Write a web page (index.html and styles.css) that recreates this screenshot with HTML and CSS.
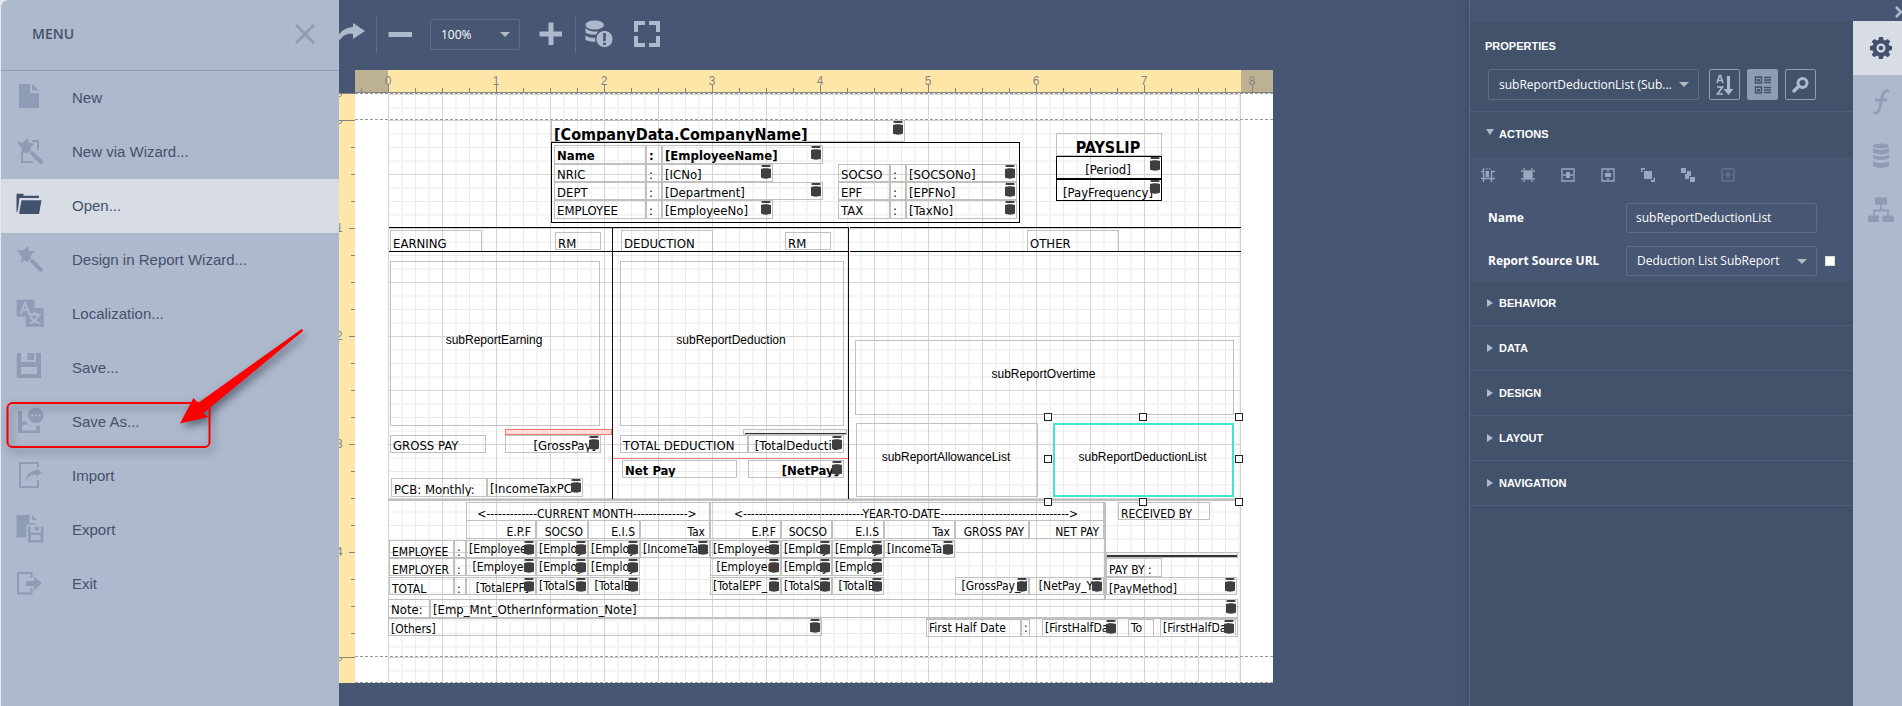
FILE: index.html
```html
<!DOCTYPE html>
<html lang="en">
<head>
<meta charset="utf-8">
<title>Report Designer</title>
<link rel="stylesheet" href="styles.css">
</head>
<body>
<div class="designer">
  <nav class="menu" aria-label="Menu">
    <header class="menu-head">
      <h1>MENU</h1>
      <button class="menu-close" aria-label="Close"><svg width="20" height="20" viewBox="0 0 20 20"><path d="M1 1l18 18M19 1L1 19" fill="none" stroke="currentColor" stroke-width="3"/></svg></button>
    </header>
    <button class="menu-item"><svg viewBox="0 0 28 28"><path d="M3 1h11v9h9v15H3zM16 1l7 6.500h-7z"/></svg>New</button>
    <button class="menu-item"><svg viewBox="0 0 28 28"><path d="M12 1l.8 5 6.200.6-4.500 3.800.5 3-4 3.500-2-1.500-4.500 2 1.500-5.500L1 5l6 .5z"/><path class="line" d="M16 4h6v9M6 17v8h11"/><path class="wand" d="M16 16l9 9"/></svg>New via Wizard...</button>
    <button class="menu-item active"><svg viewBox="0 0 28 28"><path d="M.5 2.700h7v2H23V7H3.500L2 19 .5 22z"/><path d="M5.500 9.300h20L23 23H3z"/></svg>Open...</button>
    <button class="menu-item"><svg viewBox="0 0 28 28"><path d="M12 1l.8 5 6.200.6-4.500 3.800.5 3-4 3.500-2-1.500-4.500 2 1.500-5.500L1 5l6 .5z"/><path class="wand" d="M16 16l9 9"/></svg>Design in Report Wizard...</button>
    <button class="menu-item"><svg viewBox="0 0 28 28"><path d="M.7.7H18.500V9H27.700V27.700H9.700V17.500H.7z"/><path class="cut" d="M4.500 15L9 4l4.500 11M6.500 11h5.500M12 15.500h13M18.500 12.500v3M22.500 15.500c-1 4-4 7-8.500 9M14.500 17.500c2 4 5 6 10 7"/></svg>Localization...</button>
    <button class="menu-item"><svg viewBox="0 0 28 28"><path fill-rule="evenodd" d="M.7 1.500L2 0h3v9h15V0h5v25H.7zM5 14v7h16v-7zM11.500 0H18v7h-6.500z"/></svg>Save...</button>
    <button class="menu-item"><svg viewBox="0 0 28 28"><path fill-rule="evenodd" d="M2 4h4v10h4c2 4 5 5.500 8 5.500l6-1V26H2zM6 19v4.500h14V19.500c-4 .5-7-.5-9-2.500z"/><circle cx="19.700" cy="8.500" r="7.800"/><path class="dots" d="M15 7.500h2v2h-2zM18.700 7.500h2v2h-2zM22.400 7.500h2v2h-2z"/></svg>Save As...</button>
    <button class="menu-item"><svg viewBox="0 0 28 28"><path class="line" d="M22 6V2H4v24h18v-7"/><path d="M9.700 20c.5-7 5-10.500 10.800-10.500V7l5 4.500-5 4.500v-2.500c-5 0-8 2-10.800 6.500z"/></svg>Import</button>
    <button class="menu-item"><svg viewBox="0 0 28 28"><path d="M.5 0h13v8h6v1.500h-9V22.500H.5zM16 0l5 5h-5z"/><path fill-rule="evenodd" d="M12 11.500h2.500v6H25v-6h2.500V27.500H12zM15 20v5h9.500v-5zM18.500 11.500H23v4h-4.500z"/></svg>Export</button>
    <button class="menu-item"><svg viewBox="0 0 28 28"><path class="line" d="M15.500 9V4H2v20.500h13.500v-5"/><path d="M10 12h8V7.500l8 6.700-8 6.700V17h-8z"/></svg>Exit</button>
    <svg class="callout" width="320" height="140" viewBox="0 0 320 140" aria-hidden="true">
      <rect x="7.500" y="83" width="202" height="44" rx="5" fill="none" stroke="#f40000" stroke-width="2"/>
      <path fill="#fd0000" d="M301 9.500l1.500 0 .5 1.500L203 93.500l5.500 3.500L180 103.500 193.500 78l4.500 5z"/>
    </svg>
  </nav>

  <main class="workspace">
    <div class="toolbar" role="toolbar" aria-label="Report">
      <button class="tool redo" aria-label="Redo"><svg width="27" height="24" viewBox="0 0 27 24"><path d="M-6 22C0 10 5 6 14 5V1l12 8-12 8v-5C7 11 3 14-2 22z"/></svg></button>
      <span class="rule"></span>
      <button class="tool minus" aria-label="Zoom out"><svg width="24" height="24" viewBox="0 0 24 24"><path d="M.5 10H24v5H.5z"/></svg></button>
      <span class="drop zoom"><select aria-label="Zoom"><option>100%</option></select></span>
      <button class="tool plus" aria-label="Zoom in"><svg width="24" height="24" viewBox="0 0 24 24"><path d="M.5 9.500h9V.5h5v9H23v5h-8.500V23h-5v-8.500h-9z"/></svg></button>
      <span class="rule"></span>
      <button class="tool source" aria-label="Validate bindings"><svg width="28" height="28" viewBox="0 0 28 28"><ellipse cx="9.700" cy="5" rx="9.300" ry="4.600"/><path d="M.4 8c3 3 8 4 13 3.500l-2.500 3C7 15 2 14 .4 12.500zM.4 15.500c3 2 6 2.500 10 2.200v4C6 22 2 21 .4 19.500z"/><circle cx="19.500" cy="19" r="8.600"/><path class="mark" d="M18.200 13h2.600v8h-2.600zM18.200 22.500h2.600v2.500h-2.600z"/></svg></button>
      <button class="tool full" aria-label="Full screen"><svg width="26" height="26" viewBox="0 0 26 26"><path d="M2 11V2h9M15 2h9v9M24 15v9h-9M11 24H2v-9" fill="none" stroke="currentColor" stroke-width="4"/></svg></button>
    </div>
    <div class="surface">
      <div class="ruler-x"><span>0</span><span>1</span><span>2</span><span>3</span><span>4</span><span>5</span><span>6</span><span>7</span><span>8</span></div>
      <div class="ruler-y">
        <div class="seg seg-top"><span>0</span></div>
        <div class="seg seg-detail"><span>0</span><span>1</span><span>2</span><span>3</span><span>4</span></div>
        <div class="seg seg-bottom"><span>0</span></div>
      </div>
      <div class="paper" id="paper">
        <div class="band band-top"></div>
        <div class="band band-detail"></div>
        <div class="band band-bottom"></div>
      </div>
    </div>
  </main>

  <aside class="side">
    <div class="side-top"><button class="collapse" aria-label="Collapse"><svg width="7" height="12" viewBox="0 0 7 12"><path d="M1 1l5 5-5 5" fill="none" stroke="currentColor" stroke-width="2.500"/></svg></button></div>
    <div class="side-body">
      <section class="props">
        <h2>PROPERTIES</h2>
        <div class="picker">
          <span class="drop grow"><select aria-label="Element"><option>subReportDeductionList (Sub...</option></select></span>
          <button class="square" aria-label="Sort"><svg width="20" height="22" viewBox="0 0 20 22"><path fill="none" stroke="currentColor" stroke-width="1.600" d="M2 9l2.500-7.500h1L8 9M3 6.500h4M2 13h5.500L2.500 20H8"/><path d="M12 2h3v13h3.500l-5 6-5-6H12z"/></svg></button>
          <button class="square on" aria-label="Categories"><svg width="18" height="20" viewBox="0 0 18 20"><path fill="none" stroke="currentColor" stroke-width="1.500" d="M1.500 2h6v6h-6zM1.500 12h6v6h-6zM10 2.500h7M10 5h7M10 7.500h7M10 12.500h7M10 15h7M10 17.500h7"/><path d="M3 4h3v2.500H3zM3 14h3v2.500H3z"/></svg></button>
          <button class="square" aria-label="Search"><svg width="18" height="18" viewBox="0 0 18 18"><circle cx="10.500" cy="7" r="4.500" fill="none" stroke="currentColor" stroke-width="3"/><path d="M7 10l-5 5" stroke="currentColor" stroke-width="3.500" stroke-linecap="round"/></svg></button>
        </div>
        <button class="group open"><i></i>ACTIONS</button>
        <div class="actions">
          <div class="action-bar">
            <button aria-label="Align to grid"><svg viewBox="0 0 14 14"><path class="ln" d="M2.500 0v14M10.500 4v10M0 3.500h3M10 3.500h4M0 10.500h14M5 .8h1.500M8 .8h1.500"/><path d="M4.500 3H8v6H4.500z"/></svg></button>
            <button aria-label="Size to grid"><svg viewBox="0 0 14 14"><path d="M2.500 2.500h9v9h-9z"/><path class="ln" d="M3 0v14M11 0v14M0 3h14M0 11h14" stroke-dasharray="2 1"/></svg></button>
            <button aria-label="Center horizontally"><svg viewBox="0 0 14 14"><path class="ln" d="M1 1h12v12H1zM2 7h3M9 7h3"/><path d="M5 4h4v6H5z"/></svg></button>
            <button aria-label="Center vertically"><svg viewBox="0 0 14 14"><path class="ln" d="M1 1h12v12H1zM7 1v3M7 10v3"/><path d="M4 5h6v4H4z"/></svg></button>
            <button aria-label="Bring to front"><svg viewBox="0 0 14 14"><path d="M3 3h8v8H3zM0 0h4v1.500H1.500V4H0zM14 14h-4v-2h2.500v-2H14z"/></svg></button>
            <button aria-label="Send to back"><svg viewBox="0 0 14 14"><path d="M0 0h5v5H0zM9 9h5v5H9zM4 6h2V3h4v5H8v3H4z"/></svg></button>
            <button class="off" aria-label="Fit bounds" disabled><svg viewBox="0 0 14 14"><path class="ln" d="M1 1h12v12H1z"/><path d="M5 5h4v4H5zM6 2.500h2l-1 1.500zM6 11.500h2L7 10zM2.500 6v2L4 7zM11.500 6v2L10 7z"/></svg></button>
          </div>
          <div class="prop"><label for="p-name">Name</label><input id="p-name" type="text" value="subReportDeductionList"></div>
          <div class="prop url"><label for="p-url">Report Source URL</label><span class="drop"><select id="p-url"><option>Deduction List SubReport</option></select></span><input type="checkbox" aria-label="Property marker"></div>
        </div>
        <button class="group"><i></i>BEHAVIOR</button>
        <button class="group"><i></i>DATA</button>
        <button class="group"><i></i>DESIGN</button>
        <button class="group"><i></i>LAYOUT</button>
        <button class="group"><i></i>NAVIGATION</button>
      </section>
      <div class="tabs">
        <button class="tab sel" aria-label="Properties"><svg width="24" height="24" viewBox="0 0 24 24"><path fill-rule="evenodd" d="M10 1h4l.6 3 1.500.6 2.600-1.700 2.600 2.600-1.700 2.600.6 1.400 2.800.6v4l-2.800.6-.6 1.400 1.700 2.600-2.600 2.600-2.600-1.700-1.500.6L14 23h-4l-.6-2.800-1.500-.6-2.600 1.700-2.600-2.600 1.700-2.600-.6-1.400L1 14v-4l2.800-.5.6-1.400-1.700-2.600 2.600-2.600 2.600 1.700 1.500-.6zM12 7.500a4.500 4.500 0 1 0 .01 0z"/><circle cx="12" cy="12" r="2.300"/></svg></button>
        <button class="tab" aria-label="Expressions"><svg width="18" height="26" viewBox="0 0 18 26"><path d="M17 2.500c-4-2-6 1-7 6L8 18c-1 5-3 7-6.500 5.500M3 11h12" fill="none" stroke="currentColor" stroke-width="2.800"/></svg></button>
        <button class="tab" aria-label="Fields"><svg width="16" height="26" viewBox="0 0 16 26"><ellipse cx="8" cy="3" rx="8" ry="2.600"/><path d="M0 5c3 2.500 13 2.500 16 0v4.500c-3 2.500-13 2.500-16 0zM0 11.500c3 2.500 13 2.500 16 0v3.500c-3 2.500-13 2.500-16 0zM0 18c3 2.500 13 2.500 16 0v5c-3 2.500-13 2.500-16 0z"/></svg></button>
        <button class="tab" aria-label="Report explorer"><svg width="26" height="26" viewBox="0 0 26 26"><path d="M7 .5h12v7H7zM0 18.500h11v6.500H0zM14.500 18.500H26v6.500H14.500z"/><path d="M13 7v6M6 19v-5.500h14V19" fill="none" stroke="currentColor" stroke-width="1.800"/></svg></button>
      </div>
    </div>
  </aside>
</div>
<script src="script.js"></script>
</body>
</html>
```
FILE: styles.css
```css
* { box-sizing: border-box; }
body { margin: 0; background: #475672; font-family: "Liberation Sans", Arial, sans-serif; }
button { margin: 0; padding: 0; border: 0; background: none; font: inherit; color: inherit; text-align: left; }
svg { display: block; fill: currentColor; }
select, input { font: inherit; color: inherit; }

.designer { display: flex; min-height: 100vh; background: #475672; }

/* menu */
.menu { position: relative; flex: none; width: 338px; margin-left: 1px; background: #afb9cd; color: #43526c; border-top-left-radius: 8px; box-shadow: -4px -4px 0 4px #e6e8ec; clip-path: inset(0 0 0 -1px); }
.menu-head { display: flex; align-items: center; justify-content: space-between; height: 71px; padding: 0 24px 3px 31px; border-bottom: 1px solid #8f9db5; }
.menu-head h1 { margin: 0; font: 600 14px "Open Sans", sans-serif; }
.menu-close, .menu-item svg { color: #8e9cb5; }
.menu-item { display: flex; align-items: center; gap: 28px; width: 100%; height: 54px; padding: 0 0 2px 15px; font-size: 15px; }
.menu-item svg { width: 28px; height: 28px; }
.menu-item .line { fill: none; stroke: currentColor; stroke-width: 2; }
.menu-item .wand { stroke: currentColor; stroke-width: 4; stroke-linecap: round; }
.menu-item .cut { fill: none; stroke: #afb9cd; stroke-width: 2; }
.menu-item .dots { fill: #afb9cd; }
.menu-item.active { background: #d8dce4; }
.menu-item.active svg { color: #43526c; }
.callout { position: absolute; left: -1px; top: 320px; pointer-events: none; filter: drop-shadow(3px 4px 4px rgba(30, 40, 60, .6)); }

/* workspace */
.workspace { flex: 1; min-width: 0; overflow: hidden; }
.toolbar { display: flex; align-items: center; height: 70px; padding-bottom: 2px; color: #afb9cd; }
.tool { flex: none; }
.rule { flex: none; width: 1px; height: 38px; background: #5c6b87; }
.redo { margin-right: 10px; }
.minus { margin: 0 18px 0 11px; }
.plus { margin: 0 12px 0 19px; }
.source { margin: 0 21px 0 9px; }
.source .mark { fill: #475672; }
.source circle { stroke: #475672; stroke-width: 1; }

.drop { position: relative; display: flex; height: 31px; color: #fff; font: 12px "Open Sans", "Noto Sans", sans-serif; }
.drop select { appearance: none; width: 100%; padding: 0 20px 0 10px; background: transparent; border: 1px solid #5d6c88; border-radius: 2px; }
.drop::after { content: ""; position: absolute; right: 10px; top: 13px; border: 5px solid transparent; border-top-color: #b4b8bf; border-bottom: 0; pointer-events: none; }
.zoom { width: 90px; }

.surface { display: grid; grid-template-columns: 16px 918px; grid-template-rows: 23px auto; }
.ruler-x { grid-column: 2; display: flex; overflow: hidden; border-bottom: 1px solid #85857f; color: #858585; font-size: 12px; line-height: 22px; text-align: center;
  background:
    repeating-linear-gradient(90deg, #85857f 0 1px, transparent 1px 108px) 33px 100% / 1080px 7px repeat-x,
    repeating-linear-gradient(90deg, #85857f 0 1px, transparent 1px 27px) 33px 100% / 1080px 4px repeat-x,
    linear-gradient(90deg, #bdb193 0 33px, #fde6a8 33px 886px, #bdb193 886px); }
.ruler-x span { flex: none; width: 108px; }
.ruler-x span:first-child { margin-left: -21px; }
.ruler-y { display: flex; flex-direction: column; color: #858585; font-size: 12px; }
.seg { overflow: hidden; border-top: 1px solid #85857f;
  background:
    repeating-linear-gradient(#85857f 0 1px, transparent 1px 108px) 100% -1px / 6px 1080px no-repeat,
    repeating-linear-gradient(#85857f 0 1px, transparent 1px 27px) 100% -1px / 4px 1080px no-repeat,
    #fde6a8; }
.seg span { display: block; height: 108px; margin-left: -3px; line-height: 14px; }
.seg span:first-child { margin-top: -8px; }
.seg-top { height: 27px; }
.seg-detail { height: 537px; }
.seg-bottom { height: 26px; }

.paper { position: relative; background: #fff; color: #000; font: 13px "DejaVu Sans Condensed", "DejaVu Sans", sans-serif; font-stretch: condensed; }
.band { border-bottom: 1px dashed #999; padding: 0 32px 0 33px; }
.band::before { content: ""; display: block; height: 100%; border-right: 1px dashed #d0d0d0;
  background:
    repeating-linear-gradient(90deg, #d4d4d4 0 1px, transparent 1px 54px),
    repeating-linear-gradient(#d4d4d4 0 1px, transparent 1px 54px),
    repeating-linear-gradient(90deg, #ebebeb 0 1px, transparent 1px 27px),
    repeating-linear-gradient(#ebebeb 0 1px, transparent 1px 27px),
    repeating-linear-gradient(90deg, transparent 0 13px, #f5f5f5 13px 15px, transparent 15px 27px),
    repeating-linear-gradient(transparent 0 13px, #f5f5f5 13px 15px, transparent 15px 27px); }
.band-top { height: 27px; border-top: 1px dashed #999; }
.band-detail { height: 537px; }
.band-bottom { height: 26px; }

.field { position: absolute; overflow: hidden; padding: 2px 4px 0 2px; border: 1px solid #c0c0c0; line-height: 16px; white-space: nowrap; }
.field.s { font-size: 12px; }
.field.b { font-weight: 700; }
.field.big { font-size: 16px; line-height: 20px; padding-top: 4px; }
.field.c { text-align: center; }
.field.r { text-align: right; }
.field.k { border-color: #000; }
.field.p0 { padding-top: 0; }
.field.p3 { padding-top: 3px; }
.field.p5 { padding-top: 5px; }
.field .db { position: absolute; right: 1px; top: 0; color: #3f3f3f; }
.sub { position: absolute; display: flex; align-items: center; justify-content: center; padding: 0 2px 7px 0; border: 1px solid #c0c0c0; font: 12px "Liberation Sans", Arial, sans-serif; }
.sub.picked { border: 2px solid #40e6d0; }
.mark-line { position: absolute; }
.mark-line.black { background: #000; }
.mark-line.wine { background: #2c0008; }
.mark-line.gray { background: #c0c0c0; }
.mark-line.dark { background: #333; }
.mark-line.red { background: #f87878; }
.mark-line.warn { background: #fbdcdc; border: 1px solid #f87878; }
.mark-line.hollow { border: 1px solid #c0c0c0; background: #f2f2f2; }
.handle { position: absolute; width: 8px; height: 8px; border: 1px solid #222; background: #fff; }

/* properties */
.side { flex: none; display: flex; flex-direction: column; width: 433px; border-left: 1px solid #5b6984; color: #fff; box-shadow: -2px 0 8px rgba(50, 62, 82, .4); }
.side-top { display: flex; justify-content: flex-end; height: 21px; padding: 3px 0 0; color: #afb9cd; }
.side-body { flex: 1; display: flex; }
.props { flex: 1; min-width: 0; background: #43526b; }
.props h2 { margin: 0; padding: 18px 15px 0; font-size: 11px; line-height: 15px; }
.picker { display: flex; padding: 15px 36px 11px 18px; height: 57px; }
.picker .grow { flex: none; width: 211px; margin-right: 10px; }
.square { display: flex; align-items: center; justify-content: center; flex: none; width: 31px; height: 31px; margin-right: 7px; border: 1px solid #8e9cb5; border-radius: 2px; color: #afb9cd; }
.square.on { background: #8e9cb5; color: #43526b; }
.group { display: flex; align-items: center; gap: 6px; width: 100%; height: 45px; padding-left: 17px; border-bottom: 1px solid #4e5f80; font-size: 11px; font-weight: 700; }
.group i { border: 4px solid transparent; border-left: 6px solid #afb9cd; border-right: 0; }
.group.open { gap: 5px; height: 46px; padding: 0 0 2px 16px; border-top: 1px solid #4e5f80; border-bottom: 0; }
.group.open i { border: 4px solid transparent; border-top: 6px solid #afb9cd; border-bottom: 0; margin-bottom: 4px; }
.actions { height: 124px; padding-top: 11px; background: #475672; font: 12px "Open Sans", "Noto Sans", sans-serif; }
.action-bar { display: flex; gap: 26px; padding-left: 11px; color: #9aa7bd; }
.action-bar button { width: 14px; }
.action-bar svg { width: 14px; height: 14px; }
.action-bar .ln { fill: none; stroke: currentColor; stroke-width: 1.3; }
.action-bar .off { opacity: .35; }
.prop { display: flex; align-items: center; height: 31px; margin-top: 20px; padding-left: 18px; }
.prop label { flex: none; width: 138px; font-weight: 700; }
.prop input[type=text] { width: 191px; height: 30px; padding: 0 9px; background: transparent; border: 1px solid #5d6c88; border-radius: 2px; }
.prop .drop { flex: none; width: 191px; height: 30px; }
.url { margin-top: 12px; }
.url input { flex: none; appearance: none; width: 10px; height: 10px; margin: 0 0 0 8px; background: #fff; border: 1px solid #ddd; }
.tabs { flex: none; width: 49px; background: #afb9cd; }
.tab { display: flex; align-items: center; justify-content: center; width: 100%; height: 54px; padding-left: 6px; color: #8e9cb5; }
.tab.sel { background: #d8dce4; color: #43526c; }
```
FILE: script.js
```js
// Report elements in designer coordinates; the sheet's corner is at SHEET.
const SHEET = { x: 355, y: 93 };
const paper = document.getElementById('paper');
const DB = '<svg class="db" width="10" height="14" viewBox="0 0 10 14"><path d="M1 0h8l1 1.500L8 2H2L0 1.500zM0 4c2-1 8-1 10 0v8.500c-2 1.500-8 1.500-10 0z"/></svg>';

function place(cls, x, y, x2, y2, html) {
  const el = document.createElement('div');
  el.className = cls;
  el.style.left = x - SHEET.x + 'px';
  el.style.top = y - SHEET.y + 'px';
  el.style.width = x2 - x + 'px';
  el.style.height = y2 - y + 'px';
  el.innerHTML = html || '';
  paper.append(el);
}
const field = (x, y, x2, y2, text, cls = '', bound = false) =>
  place('field ' + cls, x, y, x2 + 1, y2 + 1, text + (bound ? DB : ''));
const line = (kind, x, y, x2, y2) => place('mark-line ' + kind, x, y, x2, y2);

// header
field(551, 120, 904, 141, '[CompanyData.CompanyName]', 'b big', true);
field(551, 142, 1019, 222, '', 'k');
[['Name', '[EmployeeName]', 822, 'b'], ['NRIC', '[ICNo]', 772, ''], ['DEPT', '[Department]', 822, ''], ['EMPLOYEE', '[EmployeeNo]', 772, '']]
  .forEach(([name, value, right, cls], i) => {
    const y = [145, 164, 182, 200][i], b = [163, 181, 199, 218][i];
    field(554, y, 645, b, name, cls);
    field(646, y, 661, b, ':', cls);
    field(662, y, right, b, value, cls, true);
  });
[['SOCSO', '[SOCSONo]'], ['EPF', '[EPFNo]'], ['TAX', '[TaxNo]']].forEach(([name, value], i) => {
  const y = 164 + i * 18, b = y + (i === 2 ? 18 : 17);
  field(838, y, 889, b, name);
  field(890, y, 905, b, ':');
  field(906, y, 1016, b, value, '', true);
});
field(1056, 133, 1161, 155, 'PAYSLIP', 'b big c');
field(1056, 156, 1161, 178, '[Period]', 'k c p5', true);
field(1056, 179, 1161, 200, '[PayFrequency]', 'k c p5', true);

// column headings
field(390, 230, 481, 251, 'EARNING', 'p5');
field(555, 232, 600, 249, 'RM', 'p3');
field(621, 230, 712, 251, 'DEDUCTION', 'p5');
field(785, 232, 830, 249, 'RM', 'p3');
field(1027, 230, 1118, 251, 'OTHER', 'p5');

// sub-reports
place('sub', 390, 261, 600, 426, 'subReportEarning');
place('sub', 620, 261, 844, 426, 'subReportDeduction');
place('sub', 855, 340, 1234, 415, 'subReportOvertime');
place('sub', 856, 423, 1038, 497, 'subReportAllowanceList');
place('sub picked', 1053, 423, 1234, 497, 'subReportDeductionList');

// totals
line('warn', 505, 429, 612, 435);
line('hollow', 743, 429, 847, 435);
line('dark', 745, 433, 846, 434);
field(390, 435, 485, 452, 'GROSS PAY');
field(505, 435, 600, 452, '[GrossPay]', 'r', true);
field(620, 435, 747, 452, 'TOTAL DEDUCTION');
field(748, 435, 843, 452, '&nbsp;[TotalDeductio', '', true);
line('red', 613, 458, 848, 459);
field(622, 460, 736, 477, 'Net Pay', 'b');
field(748, 460, 843, 477, '[NetPay]', 'b r', true);
field(391, 478, 486, 496, 'PCB: Monthly:', 'p3');
field(487, 478, 582, 496, '[IncomeTaxPC', '', true);
line('black', 389, 227, 849, 228);
line('black', 850, 227, 1241, 228);
line('black', 389, 251, 849, 252);
line('black', 850, 251, 1241, 252);
line('wine', 612, 227, 613, 499);
line('wine', 848, 227, 849, 499);
line('gray', 388, 499, 1241, 501);

// contribution grid
const dashes = n => '-'.repeat(n);
field(466, 502, 709, 520, '&lt;' + dashes(13) + 'CURRENT MONTH' + dashes(14) + '&gt;', 's c p3');
field(710, 502, 1103, 520, '&lt;' + dashes(31) + 'YEAR-TO-DATE' + dashes(33) + '&gt;', 's c p3');
const heads = ['E.P.F', 'SOCSO', 'E.I.S', 'Tax'];
const starts = [[466, 536, 588, 640, 710], [710, 781, 832, 884, 955]];
starts.forEach(xs => heads.forEach((h, i) => field(xs[i], 520, xs[i + 1] - 1, 538, h, 's r p3')));
field(955, 520, 1028, 538, 'GROSS PAY', 's r p3');
field(1029, 520, 1103, 538, 'NET PAY', 's r p3');
[['EMPLOYEE', 540], ['EMPLOYER', 558], ['TOTAL', 577]].forEach(([name, y], row) => {
  field(389, y, 453, y + 17, name, 's p3');
  field(454, y, 465, y + 17, ':', 's p3');
  starts.forEach((xs, part) => {
    const values = [
      ['[Employee', '[Employ', '[Employ', '[IncomeTa'],
      ['&nbsp;[Employer', '[Employ', '[Employ'],
      [part ? '[TotalEPF_' : '&nbsp;&nbsp;[TotalEPF]', '[TotalS', '&nbsp;[TotalE']
    ][row];
    values.forEach((v, i) => field(xs[i], y, xs[i + 1] - 1, y + 17, v, row === 2 && i === 0 && !part ? 's' : 's p0', true));
  });
});
field(955, 577, 1028, 594, '&nbsp;[GrossPay_Y', 's p0', true);
field(1029, 577, 1103, 594, '&nbsp;&nbsp;[NetPay_Y', 's p0', true);
line('gray', 1104, 502, 1106, 599);

// signature block
field(1118, 502, 1209, 519, 'RECEIVED BY', 's p3');
line('hollow', 1106, 552, 1238, 558);
line('dark', 1107, 555, 1237, 557);
field(1106, 558, 1161, 576, 'PAY BY :', 's p3');
field(1106, 577, 1236, 594, '[PayMethod]', 's p3', true);

// notes
field(388, 599, 429, 617, 'Note:');
field(430, 599, 1237, 617, '[Emp_Mnt_OtherInformation_Note]', '', true);
field(388, 618, 821, 635, '[Others]', 's', true);
field(926, 618, 1237, 636, '', '');
field(926, 619, 1020, 636, 'First Half Date', 's p0');
field(1021, 619, 1029, 636, ':', 's p0');
field(1042, 619, 1117, 636, '[FirstHalfDat', 's p0', true);
field(1128, 619, 1153, 636, 'To', 's p0');
field(1160, 619, 1235, 636, '[FirstHalfDat', 's p0', true);

// selection handles
[417, 459, 502].forEach(cy => [1048, 1143, 1239].forEach(cx => {
  if (cx !== 1143 || cy !== 459) place('handle', cx - 4, cy - 4, cx + 4, cy + 4);
}));
```
